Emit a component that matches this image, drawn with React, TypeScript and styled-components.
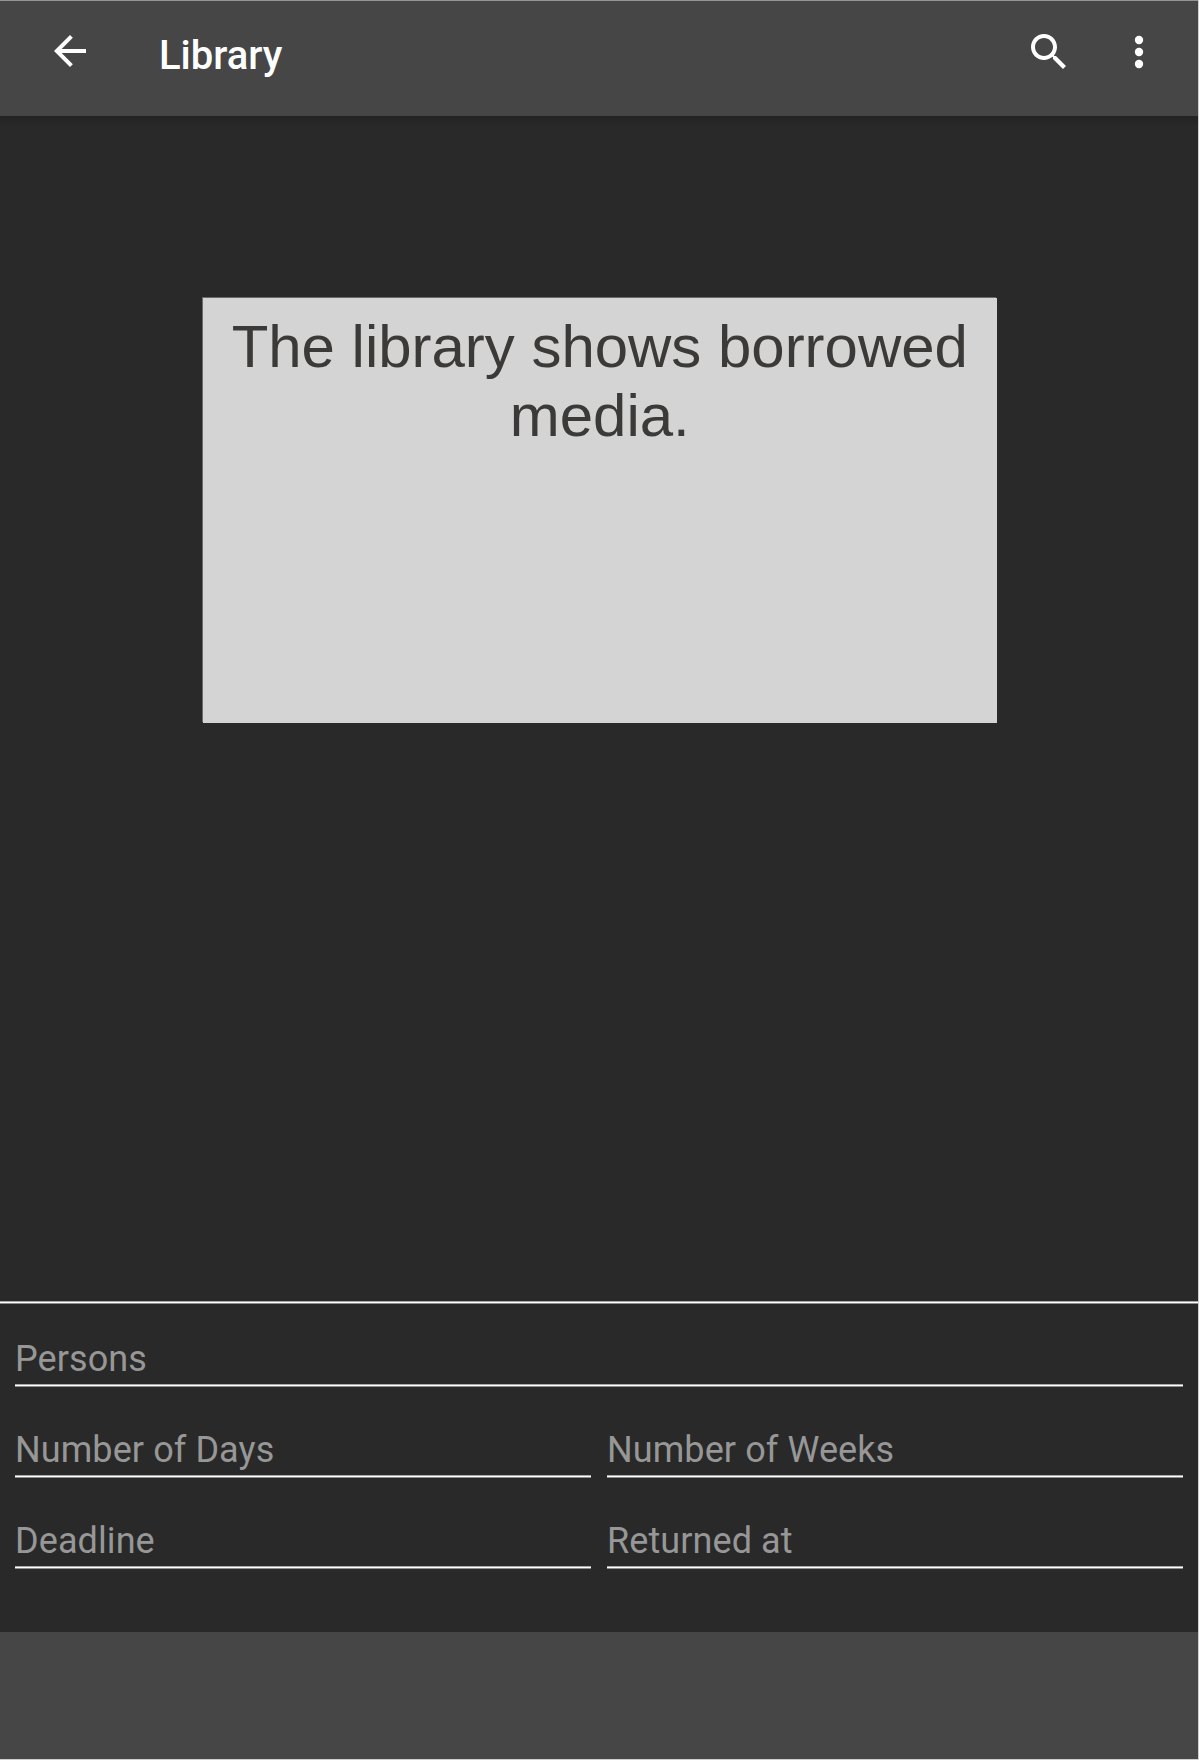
import React from "react";
import styled, { createGlobalStyle } from "styled-components";

const Global = createGlobalStyle`
  *, *::before, *::after { box-sizing: border-box; }
  body { margin: 0; background: #fff; font-family: Roboto, "Noto Sans", sans-serif; }
`;

const Screen = styled.div`
  width: 1199px;
  height: 1760px;
  padding: 0 1px 1px 0;
  display: flex;
  flex-direction: column;
  background: #cfcfcf;
`;

const AppBar = styled.header`
  height: 116px;
  flex: none;
  display: flex;
  align-items: flex-start;
  padding-right: 35px;
  border-top: 1px solid #959595;
  background: #464646;
  color: #fff;
`;

const IconButton = styled.button<{ $left: number; $top: number }>`
  flex: none;
  width: 48px;
  height: 48px;
  margin: ${(p) => p.$top}px 0 0 ${(p) => p.$left}px;
  padding: 0;
  border: 0;
  background: none;
  color: inherit;
  svg { display: block; width: 100%; height: 100%; fill: currentColor; }
`;

const Title = styled.h1`
  flex: 1;
  margin: 30px 0 0 65px;
  font-size: 40px;
  line-height: 50px;
  font-weight: 500;
`;

const Content = styled.main`
  flex: 1;
  padding: 182px 0 0 203px;
  background: linear-gradient(#232323, #292929 10px);
`;

const Message = styled.section`
  width: 793.5px;
  height: 425px;
  padding: 14px 20px;
  background: #d4d4d4;
  box-shadow: -1px -1px 0 #6a6a6a;
  color: #3b3a38;
  font: 59.95px/69px "Liberation Sans", Arial, sans-serif;
  text-align: center;
`;

const Rule = styled.div`
  height: 3px;
  flex: none;
  background: linear-gradient(#a8a8a8 1px, #fff 1px 2px, #8c8c8c 2px);
`;

const Form = styled.form`
  height: 328px;
  flex: none;
  padding: 0 15px;
  display: grid;
  grid-template-columns: 576px 576px;
  grid-template-rows: 83px 91px 91px;
  column-gap: 16px;
  background: #292929;
`;

const Field = styled.label<{ $wide?: boolean }>`
  grid-column: ${(p) => (p.$wide ? "1 / -1" : "auto")};
  display: flex;
  flex-direction: column;
  justify-content: flex-end;
  color: #979797;
  font-size: 36px;
  line-height: 44px;
  letter-spacing: 0.09px;
`;

const Label = styled.span`
  padding: 0 0 3px;
`;

const BottomBar = styled.footer`
  height: 127px;
  flex: none;
  background: #464646;
`;

const fields = ["Number of Days", "Number of Weeks", "Deadline", "Returned at"];

export default function App() {
  return (
    <>
      <Global />
      <Screen>
        <AppBar>
          <IconButton $left={46} $top={26} aria-label="Back">
            <svg viewBox="0 0 24 24"><path d="M20 11H7.83l5.59-5.59L12 4l-8 8 8 8 1.41-1.41L7.83 13H20v-2z" /></svg>
          </IconButton>
          <Title>Library</Title>
          <IconButton $left={0} $top={27} aria-label="Search">
            <svg viewBox="0 0 24 24"><path d="M15.5 14h-.79l-.28-.27C15.41 12.59 16 11.11 16 9.5 16 5.91 13.09 3 9.5 3S3 5.91 3 9.5 5.91 16 9.5 16c1.61 0 3.09-.59 4.23-1.57l.27.28v.79l5 4.99L20.49 19l-4.99-5zm-6 0C7.01 14 5 11.99 5 9.5S7.01 5 9.5 5 14 7.01 14 9.5 11.99 14 9.5 14z" /></svg>
          </IconButton>
          <IconButton $left={42} $top={27} aria-label="More options">
            <svg viewBox="0 0 24 24"><circle cx="12" cy="6" r="2.1" /><circle cx="12" cy="12" r="2.1" /><circle cx="12" cy="18" r="2.1" /></svg>
          </IconButton>
        </AppBar>
        <Content>
          <Message>The library shows borrowed media.</Message>
        </Content>
        <Rule />
        <Form>
          <Field $wide><Label>Persons</Label><Rule /></Field>
          {fields.map((name) => (
            <Field key={name}><Label>{name}</Label><Rule /></Field>
          ))}
        </Form>
        <BottomBar />
      </Screen>
    </>
  );
}
